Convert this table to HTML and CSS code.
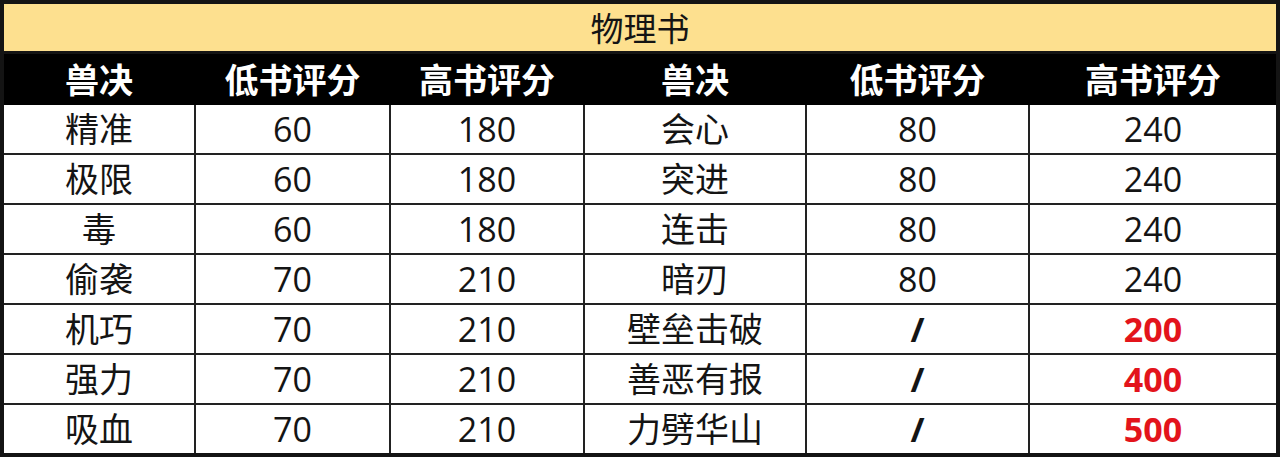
FILE: index.html
```html
<!DOCTYPE html>
<html lang="zh-CN">
<head>
<meta charset="utf-8">
<title>物理书</title>
<link rel="stylesheet" href="styles.css">
</head>
<body>
<table class="book-table">
  <colgroup>
    <col class="c1"><col class="c2"><col class="c3"><col class="c4"><col class="c5"><col class="c6">
  </colgroup>
  <tr class="title-row"><td colspan="6">物理书</td></tr>
  <tr class="head-row">
    <td>兽决</td><td>低书评分</td><td>高书评分</td><td>兽决</td><td>低书评分</td><td>高书评分</td>
  </tr>
  <tr><td>精准</td><td>60</td><td>180</td><td>会心</td><td>80</td><td>240</td></tr>
  <tr><td>极限</td><td>60</td><td>180</td><td>突进</td><td>80</td><td>240</td></tr>
  <tr><td>毒</td><td>60</td><td>180</td><td>连击</td><td>80</td><td>240</td></tr>
  <tr><td>偷袭</td><td>70</td><td>210</td><td>暗刃</td><td>80</td><td>240</td></tr>
  <tr><td>机巧</td><td>70</td><td>210</td><td>壁垒击破</td><td class="none">/</td><td class="hot">200</td></tr>
  <tr><td>强力</td><td>70</td><td>210</td><td>善恶有报</td><td class="none">/</td><td class="hot">400</td></tr>
  <tr><td>吸血</td><td>70</td><td>210</td><td>力劈华山</td><td class="none">/</td><td class="hot">500</td></tr>
</table>
</body>
</html>
```
FILE: styles.css
```css
html, body {
  margin: 0;
  padding: 0;
  background: #ffffff;
}
.book-table {
  border-collapse: collapse;
  table-layout: fixed;
  width: 1276px;
  border: 4px solid #141414;
  font-family: "Open Sans", "Noto Sans CJK SC", sans-serif;
  font-size: 34px;
  color: #141414;
}
.c1 { width: 193px; }
.c2 { width: 195px; }
.c3 { width: 194px; }
.c4 { width: 222px; }
.c5 { width: 223px; }
.c6 { width: 249px; }
.book-table td {
  border: 2px solid #222222;
  text-align: center;
  vertical-align: middle;
  padding: 0;
  height: 48px;
  line-height: 1;
  overflow: hidden;
}
.title-row td {
  background: #fde08f;
  height: 47px;
  border-bottom: 3px solid #141414;
  font-family: "Noto Sans CJK SC", sans-serif;
  font-size: 33px;
}
.head-row td {
  background: #000000;
  color: #ffffff;
  font-weight: 700;
  height: 49px;
  border-color: #000000;
  font-family: "Noto Sans CJK SC", sans-serif;
}
.book-table td.none {
  font-weight: 700;
}
.book-table td.hot {
  color: #e3141b;
  font-weight: 700;
}
```
